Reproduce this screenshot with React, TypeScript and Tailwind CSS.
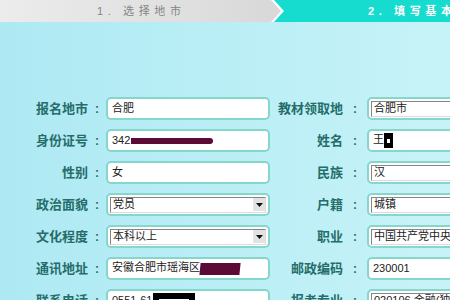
import React from "react";

type Field = {
  label: string;
  value: React.ReactNode;
  select?: boolean;
  arrow?: boolean;
};

const leftFields: Field[] = [
  { label: "报名地市", value: "合肥" },
  {
    label: "身份证号",
    value: (
      <>
        342
        <span className="ml-[1px] inline-block h-[6px] w-[82px] rounded-r-full bg-[#5c0b36] align-middle" />
      </>
    ),
  },
  { label: "性别", value: "女" },
  { label: "政治面貌", value: "党员", select: true, arrow: true },
  { label: "文化程度", value: "本科以上", select: true, arrow: true },
  {
    label: "通讯地址",
    value: (
      <>
        安徽合肥市瑶海区
        <span className="inline-block h-[12px] w-[40px] -skew-x-6 bg-[#5c0b36] align-middle" />
      </>
    ),
  },
  {
    label: "联系电话",
    value: (
      <>
        0551-61
        <span className="ml-[1px] inline-flex h-[16px] w-[42px] items-center justify-center bg-black align-middle">
          <span className="h-[3px] w-[30px] bg-white" />
        </span>
      </>
    ),
  },
];

const rightFields: Field[] = [
  { label: "教材领取地", value: "合肥市", select: true },
  {
    label: "姓名",
    value: (
      <>
        王
        <span className="inline-flex h-[15px] w-[9px] items-center justify-center bg-black align-middle">
          <span className="h-[4px] w-[3px] bg-white" />
        </span>
      </>
    ),
  },
  { label: "民族", value: "汉", select: true },
  { label: "户籍", value: "城镇", select: true },
  { label: "职业", value: "中国共产党中央委员会", select: true },
  { label: "邮政编码", value: "230001" },
  { label: "报考专业", value: "020106 金融(独立本科段)", select: true },
];

const InputBox = ({ field, width }: { field: Field; width: string }) => (
  <div
    className={`flex h-[23px] shrink-0 items-center rounded-[5px] border-2 border-[#86d6cc] bg-white ${width}`}
  >
    {field.select ? (
      <div className="mx-[2px] flex h-[16px] flex-1 items-center overflow-hidden border border-[#858585] border-r-[#dcdcdc] border-b-[#dcdcdc] bg-white">
        <span className="flex-1 whitespace-nowrap pl-[2px] text-[11px] leading-none text-[#222]">
          {field.value}
        </span>
        {field.arrow && (
          <span className="flex h-[13px] w-[12px] shrink-0 items-center justify-center border-l border-[#e6e6e6] bg-[#e2e2e2]">
            <svg width="7" height="4" viewBox="0 0 7 4">
              <path d="M0 0h7L3.5 4z" fill="#111" />
            </svg>
          </span>
        )}
      </div>
    ) : (
      <span className="whitespace-nowrap pl-[4px] text-[11px] leading-none text-[#222]">
        {field.value}
      </span>
    )}
  </div>
);

const App = () => {
  return (
    <div
      className="h-[300px] w-[450px] overflow-hidden bg-gradient-to-r from-[#aee9f3] to-[#c6f3f8]"
      style={{ fontFamily: '"Liberation Sans", "Noto Sans CJK SC", sans-serif' }}
    >
      <div className="flex h-[22px] bg-[#16dccf]">
        <div className="h-full w-[284px] shrink-0 bg-white [clip-path:polygon(0_0,274px_0,284px_50%,274px_100%,0_100%)]">
          <div className="flex h-full w-full items-center bg-gradient-to-r from-[#ececec] to-[#d8d8d8] pl-[97px] text-[11px] tracking-[0.42em] text-[#858585] [clip-path:polygon(0_0,271px_0,281px_50%,271px_100%,0_100%)]">
            1.&nbsp;选择地市
          </div>
        </div>
        <div className="flex items-center whitespace-nowrap pl-[84px] text-[11px] font-bold tracking-[0.42em] text-white">
          2.&nbsp;填写基本信息
        </div>
      </div>

      <div className="mt-[75px] flex flex-col gap-[9px]">
        {leftFields.map((lf, i) => {
          const rf = rightFields[i];
          return (
            <div key={lf.label} className="flex h-[23px] items-center">
              <span className="w-[88px] shrink-0 text-right text-[13px] font-bold text-[#256d69]">
                {lf.label}
              </span>
              <span className="w-[18px] shrink-0 text-center text-[12px] font-bold text-[#256d69]">
                :
              </span>
              <InputBox field={lf} width="w-[164px]" />
              <span className="w-[73px] shrink-0 whitespace-nowrap text-right text-[13px] font-bold text-[#256d69]">
                {rf.label}
              </span>
              <span className="w-[24px] shrink-0 text-center text-[12px] font-bold text-[#256d69]">
                :
              </span>
              <InputBox field={rf} width="w-[130px]" />
            </div>
          );
        })}
      </div>
    </div>
  );
};

export default App;
